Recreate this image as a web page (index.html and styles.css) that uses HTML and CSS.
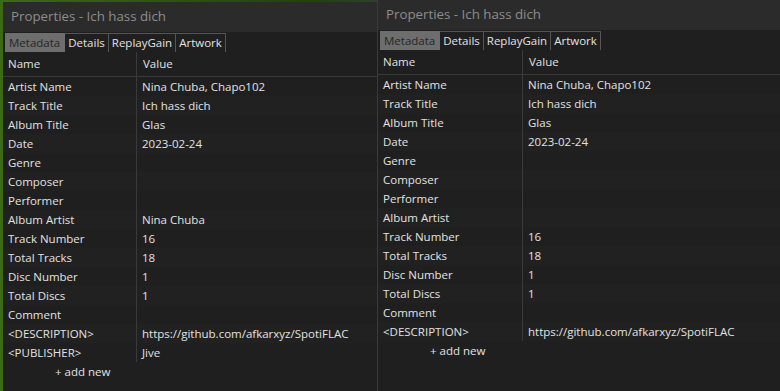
FILE: index.html
```html
<!DOCTYPE html>
<html lang="en">
<head>
    <meta charset="UTF-8">
    <title>Properties - Ich hass dich</title>
    <link rel="stylesheet" href="styles.css">
</head>
<body>

<div class="desktop">

    <div class="window window-back">
        <div class="titlebar">Properties - Ich hass dich</div>
        <div class="tabs">
            <span class="tab active">Metadata</span>
            <span class="tab">Details</span>
            <span class="tab">ReplayGain</span>
            <span class="tab">Artwork</span>
        </div>
        <div class="table">
            <div class="row head"><span class="key">Name</span><span class="val">Value</span></div>
            <div class="row"><span class="key">Artist Name</span><span class="val">Nina Chuba, Chapo102</span></div>
            <div class="row"><span class="key">Track Title</span><span class="val">Ich hass dich</span></div>
            <div class="row"><span class="key">Album Title</span><span class="val">Glas</span></div>
            <div class="row"><span class="key">Date</span><span class="val">2023-02-24</span></div>
            <div class="row"><span class="key">Genre</span><span class="val"></span></div>
            <div class="row"><span class="key">Composer</span><span class="val"></span></div>
            <div class="row"><span class="key">Performer</span><span class="val"></span></div>
            <div class="row"><span class="key">Album Artist</span><span class="val">Nina Chuba</span></div>
            <div class="row"><span class="key">Track Number</span><span class="val">16</span></div>
            <div class="row"><span class="key">Total Tracks</span><span class="val">18</span></div>
            <div class="row"><span class="key">Disc Number</span><span class="val">1</span></div>
            <div class="row"><span class="key">Total Discs</span><span class="val">1</span></div>
            <div class="row"><span class="key">Comment</span><span class="val"></span></div>
            <div class="row"><span class="key">&lt;DESCRIPTION&gt;</span><span class="val">https://github.com/afkarxyz/SpotiFLAC</span></div>
            <div class="row"><span class="key">&lt;PUBLISHER&gt;</span><span class="val">Jive</span></div>
        </div>
        <div class="add-new">+ add new</div>
    </div>

    <div class="window window-front">
        <div class="titlebar">Properties - Ich hass dich</div>
        <div class="tabs">
            <span class="tab active">Metadata</span>
            <span class="tab">Details</span>
            <span class="tab">ReplayGain</span>
            <span class="tab">Artwork</span>
        </div>
        <div class="table">
            <div class="row head"><span class="key">Name</span><span class="val">Value</span></div>
            <div class="row"><span class="key">Artist Name</span><span class="val">Nina Chuba, Chapo102</span></div>
            <div class="row"><span class="key">Track Title</span><span class="val">Ich hass dich</span></div>
            <div class="row"><span class="key">Album Title</span><span class="val">Glas</span></div>
            <div class="row"><span class="key">Date</span><span class="val">2023-02-24</span></div>
            <div class="row"><span class="key">Genre</span><span class="val"></span></div>
            <div class="row"><span class="key">Composer</span><span class="val"></span></div>
            <div class="row"><span class="key">Performer</span><span class="val"></span></div>
            <div class="row"><span class="key">Album Artist</span><span class="val"></span></div>
            <div class="row"><span class="key">Track Number</span><span class="val">16</span></div>
            <div class="row"><span class="key">Total Tracks</span><span class="val">18</span></div>
            <div class="row"><span class="key">Disc Number</span><span class="val">1</span></div>
            <div class="row"><span class="key">Total Discs</span><span class="val">1</span></div>
            <div class="row"><span class="key">Comment</span><span class="val"></span></div>
            <div class="row"><span class="key">&lt;DESCRIPTION&gt;</span><span class="val">https://github.com/afkarxyz/SpotiFLAC</span></div>
        </div>
        <div class="add-new">+ add new</div>
    </div>

</div>

</body>
</html>
```

FILE: styles.css
```css
body {
    margin: 0;
    font-family: 'Open Sans', 'Noto Sans', sans-serif;
    font-size: 11.5px;
    color: #e2e2e2;
    background-color: #2c4a12;
}

.desktop {
    position: relative;
    width: 780px;
    height: 391px;
    overflow: hidden;
    background: linear-gradient(90deg, #3d6a14 0, #25400d 40%, #4a3f8a 70%, #2f5612 100%);
}

.window {
    position: absolute;
    background-color: #1f1f1f;
    display: flex;
    flex-direction: column;
}

.window-back {
    left: 3px;
    top: 2px;
    width: 400px;
    height: 389px;
}

.window-front {
    left: 377px;
    top: 0;
    width: 402px;
    height: 391px;
    border-left: 1px solid #3a3a3a;
}

.titlebar {
    height: 30px;
    line-height: 28px;
    padding-left: 8px;
    background-color: #2b2b2b;
    color: #8d8d8d;
    font-size: 13.3px;
}

.tabs {
    display: flex;
    padding: 1px 0 0 2px;
    height: 19px;
}

.tab {
    padding: 0 3px;
    line-height: 17px;
    border: 1px solid #555;
    border-left: none;
    border-bottom: none;
    color: #e2e2e2;
}

.tab.active {
    background-color: #6e6e6e;
    color: #262626;
    border-color: #6e6e6e;
    padding: 0 4px;
}

.table {
    display: flex;
    flex-direction: column;
}

.row {
    display: flex;
    height: 19px;
    line-height: 19px;
}

.row:nth-child(odd) {
    background-color: #212121;
}

.row.head {
    height: 24px;
    line-height: 23px;
    background-color: #1f1f1f;
    border-bottom: 1px solid #383838;
}

.key {
    width: 128px;
    padding-left: 5px;
    border-right: 1px solid #3a3a3a;
    white-space: nowrap;
}

.val {
    padding-left: 5px;
    white-space: nowrap;
}

.row.head .val {
    padding-left: 6px;
}

.window-front .key {
    width: 139px;
    padding-left: 5px;
}

.add-new {
    height: 19px;
    line-height: 19px;
    padding-left: 52px;
    background-color: #1f1f1f;
}
```
